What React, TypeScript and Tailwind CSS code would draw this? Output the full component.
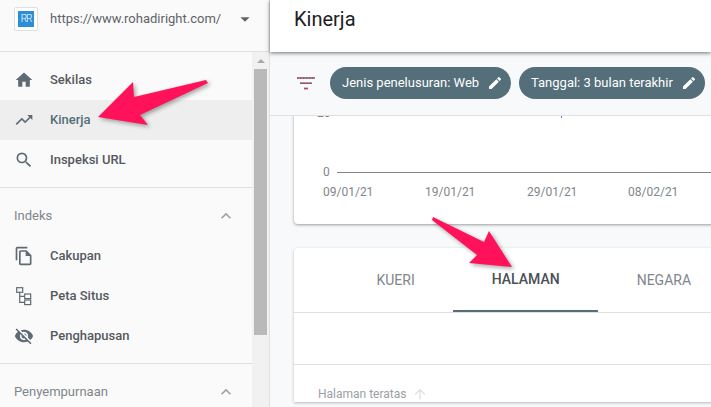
import type { ReactNode } from "react";
import { MdArrowDropDown, MdEdit, MdExpandLess, MdHome, MdOutlineFileCopy, MdSearch, MdTrendingUp, MdVisibilityOff, MdArrowUpward } from "react-icons/md";

function SitemapIcon() {
  return (
    <svg width="20" height="20" viewBox="0 0 20 20" fill="none" stroke="#5f6b73" strokeWidth="1.2">
      <rect x="2.700" y="1.700" width="6" height="4.600" />
      <rect x="10.700" y="8" width="6" height="4.600" />
      <rect x="10.700" y="14" width="6" height="4.600" />
      <path d="M5.700 6.300V16.300H10.700M5.700 10.300H10.700" />
    </svg>
  );
}

function NavItem({ icon, label, active }: { icon: ReactNode; label: string; active?: boolean }) {
  return (
    <div className={active ? "flex h-10 items-center bg-[#eeeeee] pl-[14px] text-[#546e7a]" : "flex h-10 items-center pl-[14px] text-[#55595e]"}>
      <div className="flex w-[36px] items-center text-[#5f6b73]">{icon}</div>
      <span className="text-[13px] font-medium">{label}</span>
    </div>
  );
}

function SectionHead({ label }: { label: string }) {
  return (
    <div className="flex h-10 items-center justify-between pl-[14px] pr-[16px] text-[13px] text-[#80868b]">
      <span>{label}</span>
      <MdExpandLess size={20} className="text-[#9aa0a6]" />
    </div>
  );
}

function Chip({ label, width }: { label: string; width: string }) {
  return (
    <div className={`flex h-8 items-center justify-between rounded-full bg-[#546e7a] pl-3 pr-[8px] text-[13px] text-white ${width}`}>
      <span>{label}</span>
      <MdEdit size={16} />
    </div>
  );
}

function Sidebar() {
  return (
    <aside className="flex h-full w-[270px] shrink-0 flex-col border-r border-[#e0e0e0] bg-[#fafafa]">
      <div className="flex h-[52px] shrink-0 items-center border-b border-[#e0e0e0] pb-[13px] pl-[14px] pr-[13px]">
        <div className="flex h-6 w-6 items-center justify-center rounded-[2px] border border-[#e0e0e0] bg-white">
          <div className="flex h-4 w-4 items-center justify-center bg-[#2b8fd6] text-[10px] font-light leading-none tracking-[-1px] text-white">RR</div>
        </div>
        <span className="ml-[12px] flex-1 text-[13px] text-[#5f6368]">https://www.rohadiright.com/</span>
        <MdArrowDropDown size={22} className="text-[#5f6368]" />
      </div>
      <div className="flex min-h-0 flex-1">
        <nav className="w-[252px] shrink-0 overflow-hidden pt-2">
          <NavItem icon={<MdHome size={20} />} label="Sekilas" />
          <NavItem icon={<MdTrendingUp size={20} />} label="Kinerja" active />
          <NavItem icon={<MdSearch size={20} />} label="Inspeksi URL" />
          <div className="mt-[7px] border-t border-[#e0e0e0] pt-2">
            <SectionHead label="Indeks" />
            <NavItem icon={<MdOutlineFileCopy size={20} />} label="Cakupan" />
            <NavItem icon={<SitemapIcon />} label="Peta Situs" />
            <NavItem icon={<MdVisibilityOff size={20} />} label="Penghapusan" />
          </div>
          <div className="mt-[7px] border-t border-[#e0e0e0] pt-2">
            <SectionHead label="Penyempurnaan" />
          </div>
        </nav>
        <div className="flex w-[17px] flex-col items-center bg-[#f1f1f1]">
          <div className="flex h-[17px] w-full items-center justify-center">
            <div className="h-0 w-0 border-x-[4px] border-b-[4px] border-x-transparent border-b-[#a8a8a8]" />
          </div>
          <div className="h-[266px] w-[13px] bg-[#b9b9b9]" />
        </div>
      </div>
    </aside>
  );
}

function ChartCard() {
  return (
    <section className="relative -mt-2 h-[116px] w-[600px] rounded-b bg-white pl-[29px] text-[12px] text-[#80868b] shadow-[0_1px_3px_rgba(60,64,67,0.5)]">
      <div className="-ml-[6px] h-[8px] leading-[10px]">20</div>
      <div className="absolute left-[267px] top-2 h-[2px] w-px bg-[#4285f4]" />
      <div className="mt-[49px] flex items-center gap-[7px] leading-[14px]">
        <span className="text-[12px]">0</span>
        <div className="h-px flex-1 bg-[#80868b]" />
      </div>
      <div className="mt-[6px] flex leading-[14px]">
        <span className="w-[102px]">09/01/21</span>
        <span className="w-[102px]">19/01/21</span>
        <span className="w-[101px]">29/01/21</span>
        <span>08/02/21</span>
      </div>
    </section>
  );
}

function TableCard() {
  return (
    <section className="mt-6 w-[600px] rounded-t bg-white shadow-[0_1px_3px_rgba(60,64,67,0.35)]">
      <div className="flex h-[65px] border-b border-[#e0e0e0] pl-[44px] text-[14px]">
        <div className="flex h-[64px] items-center px-[38.5px] text-[#80868b]">KUERI</div>
        <div className="flex h-[64px] items-center border-b-2 border-[#546e7a] px-[38.5px] font-medium text-[#4a5056]">HALAMAN</div>
        <div className="flex h-[64px] items-center px-[38.5px] text-[#80868b]">NEGARA</div>
      </div>
      <div className="h-[52px] border-b border-[#e0e0e0]" />
      <div className="flex items-center gap-[6px] pl-6 pt-[21px] text-[12px] leading-4 text-[#9aa0a6]">
        <span>Halaman teratas</span>
        <MdArrowUpward size={16} className="text-[#e0e0e0]" />
      </div>
    </section>
  );
}

export default function App() {
  return (
    <div className="relative flex h-[407px] w-[711px] overflow-hidden bg-[#f8f9fa] font-['Roboto',sans-serif]">
      <Sidebar />
      <main className="flex min-w-0 flex-1 flex-col">
        <header className="z-10 flex h-[52px] shrink-0 items-center bg-white pb-[15px] pl-[24px] text-[20px] text-[#202124] shadow-[0_1px_4px_rgba(60,64,67,0.75)]">
          Kinerja
        </header>
        <div className="relative flex h-[64px] shrink-0 items-center gap-2 border-b border-[#e0e0e0] bg-[#f8f9fa] pb-px pl-[60px]">
          <svg className="absolute left-[26px] top-[24px]" width="20" height="16" viewBox="0 0 20 16" fill="none" strokeWidth="1.5">
            <path d="M1 2H19M4 7.250H16M8 12.500H12" stroke="#546e7a" />
            <path d="M1 2H19M4 7.250H16M8 12.500H12" stroke="#e0365f" strokeDasharray="1.500 1.500" />
          </svg>
          <Chip label="Jenis penelusuran: Web" width="w-[181px]" />
          <Chip label="Tanggal: 3 bulan terakhir" width="w-[186px] shrink-0" />
        </div>
        <div className="min-h-0 flex-1 overflow-hidden pl-[24px]">
          <ChartCard />
          <TableCard />
        </div>
      </main>
      <svg className="absolute left-0 top-0 drop-shadow-[2px_2px_2px_rgba(0,0,0,0.35)]" width="711" height="407" viewBox="0 0 711 407" fill="#ff1259">
        <path d="M206 80L134 97L133 82L98 117L148 125L140 115L208 83Z" />
        <path d="M433 217L484 242L489 231L512 267L469 263L477 255L432 220Z" />
      </svg>
    </div>
  );
}
